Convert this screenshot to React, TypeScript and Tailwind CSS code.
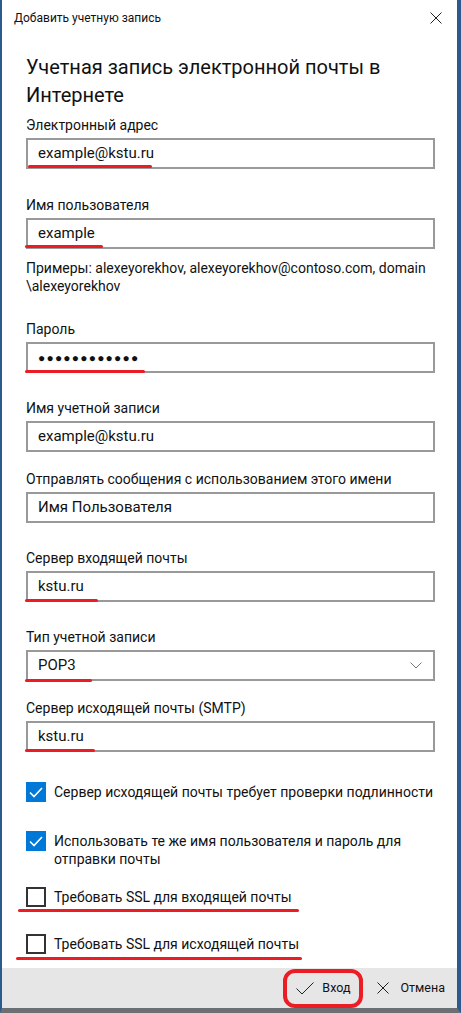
import type { ReactNode } from "react";

type FieldProps = {
  label: string;
  className?: string;
  children: ReactNode;
  mark?: { top: number; left: number; width: number };
  select?: boolean;
};

function Mark({ top, left, width }: { top: number; left: number; width: number }) {
  return (
    <span
      className="absolute h-[3px] rounded-full bg-[#ec1c24]"
      style={{ top, left, width }}
    />
  );
}

function Field({ label, className = "", children, mark, select }: FieldProps) {
  return (
    <div className={className}>
      <div className="h-5 leading-5 text-[14px] mb-[3px]">{label}</div>
      <div className="relative h-[31px] border-2 border-[#999999] px-[10px] flex items-center justify-between text-[15px]">
        <span className="-mt-px">{children}</span>
        {select && (
          <svg width="12" height="7" viewBox="0 0 12 7" className="mr-[1px]">
            <polyline points="0.5,0.5 6,6 11.5,0.5" fill="none" stroke="#777" strokeWidth="1" />
          </svg>
        )}
        {mark && <Mark {...mark} />}
      </div>
    </div>
  );
}

function CheckBox({ checked }: { checked: boolean }) {
  if (checked) {
    return (
      <span className="w-5 h-5 -mt-px shrink-0 bg-[#0078d7] flex items-center justify-center">
        <svg width="14" height="11" viewBox="0 0 14 11">
          <polyline points="1,5.5 5,9.5 13,1" fill="none" stroke="#fff" strokeWidth="1.6" />
        </svg>
      </span>
    );
  }
  return <span className="w-5 h-5 -mt-px shrink-0 border-2 border-[#333333]" />;
}

type RowProps = {
  checked: boolean;
  className?: string;
  children: ReactNode;
  mark?: { top: number; left: number; width: number };
};

function CheckRow({ checked, className = "", children, mark }: RowProps) {
  return (
    <div className={`relative flex items-start gap-2 text-[14px] leading-[18px] ${className}`}>
      <CheckBox checked={checked} />
      <div className="whitespace-nowrap">{children}</div>
      {mark && <Mark {...mark} />}
    </div>
  );
}

export default function App() {
  return (
    <div className="w-[461px] h-[1013px] flex flex-col bg-white border-l-2 border-r-4 border-b-[5px] border-l-[#2b5a8f] border-r-[#2b5a8f] border-b-[#6b6e73] font-['Roboto',sans-serif] text-[#111111]">
      <div className="h-9 shrink-0 flex items-center justify-between pl-3 pr-[15px]">
        <span className="text-[12px]">Добавить учетную запись</span>
        <svg width="12" height="12" viewBox="0 0 12 12">
          <path d="M0.5 0.5 L11.5 11.5 M11.5 0.5 L0.5 11.5" stroke="#222" strokeWidth="1" />
        </svg>
      </div>

      <div className="flex-1 min-h-0 pl-6 pr-[22px]">
        <h1 className="mt-[17px] text-[20px] leading-[28px] font-normal">
          Учетная запись электронной почты в
          <br />
          Интернете
        </h1>

        <Field label="Электронный адрес" className="mt-[6px]" mark={{ top: 25, left: 0, width: 124 }}>
          example@kstu.ru
        </Field>

        <Field label="Имя пользователя" className="mt-[26px]" mark={{ top: 25, left: -3, width: 78 }}>
          example
        </Field>

        <p className="mt-[10px] text-[14px] leading-[18px] whitespace-nowrap">
          Примеры: alexeyorekhov, alexeyorekhov@contoso.com, domain
          <br />
          \alexeyorekhov
        </p>

        <Field label="Пароль" className="mt-6" mark={{ top: 26, left: -3, width: 120 }}>
          <span className="text-[12px] tracking-[1.2px]">●●●●●●●●●●●●</span>
        </Field>

        <Field label="Имя учетной записи" className="mt-[25px]">
          example@kstu.ru
        </Field>

        <Field label="Отправлять сообщения с использованием этого имени" className="mt-[17px]">
          Имя Пользователя
        </Field>

        <Field label="Сервер входящей почты" className="mt-[25px]" mark={{ top: 26, left: -3, width: 73 }}>
          kstu.ru
        </Field>

        <Field label="Тип учетной записи" className="mt-[25px]" mark={{ top: 27, left: -3, width: 67 }} select>
          POP3
        </Field>

        <Field label="Сервер исходящей почты (SMTP)" className="mt-[17px]" mark={{ top: 26, left: -3, width: 70 }}>
          kstu.ru
        </Field>

        <CheckRow checked className="mt-[31px]">
          Сервер исходящей почты требует проверки подлинности
        </CheckRow>

        <CheckRow checked className="mt-[30px]">
          Использовать те же имя пользователя и пароль для
          <br />
          отправки почты
        </CheckRow>

        <CheckRow checked={false} className="mt-5" mark={{ top: 21, left: -8, width: 281 }}>
          Требовать SSL для входящей почты
        </CheckRow>

        <CheckRow checked={false} className="mt-7" mark={{ top: 22, left: -10, width: 286 }}>
          Требовать SSL для исходящей почты
        </CheckRow>
      </div>

      <div className="h-10 shrink-0 bg-[#e6e6e6] flex items-center justify-end pr-3 text-[12.5px]">
        <button className="relative h-5 leading-5 flex items-center gap-2">
          <svg width="18" height="13" viewBox="0 0 18 13">
            <polyline points="0.5,6.5 6,12 17.5,0.5" fill="none" stroke="#222" strokeWidth="1" />
          </svg>
          <span>Вход</span>
          <span className="absolute -left-[13px] -right-[13px] -top-[9px] -bottom-[10px] border-4 border-[#ec1c24] rounded-xl" />
        </button>
        <button className="ml-[27px] h-5 leading-5 flex items-center gap-[11px]">
          <svg width="12" height="12" viewBox="0 0 12 12">
            <path d="M0.5 0.5 L11.5 11.5 M11.5 0.5 L0.5 11.5" stroke="#222" strokeWidth="1" />
          </svg>
          <span>Отмена</span>
        </button>
      </div>
    </div>
  );
}
